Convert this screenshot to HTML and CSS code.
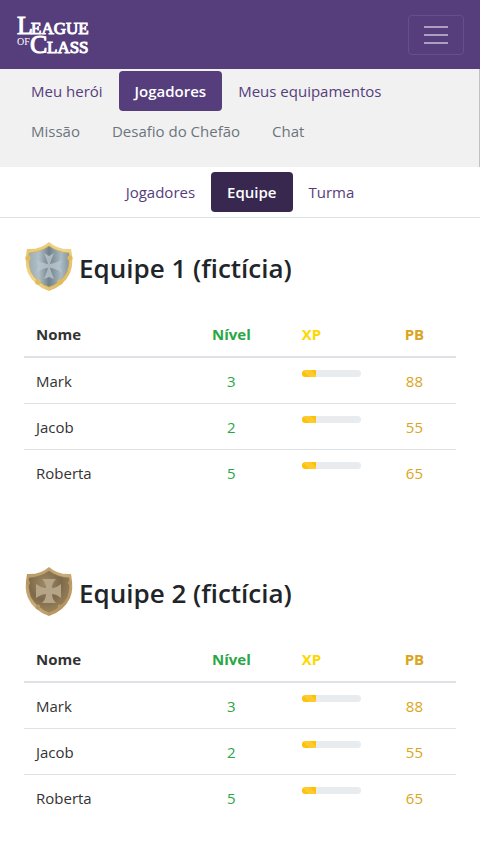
FILE: index.html
```html
<!DOCTYPE html>
<html lang="pt-BR">
<head>
<meta charset="utf-8">
<meta name="viewport" content="width=device-width, initial-scale=1">
<title>League of Class</title>
<link rel="stylesheet" href="styles.css">
</head>
<body>
<header class="navbar">
  <a class="brand" href="#" aria-label="League of Class">
    <svg class="logo" viewBox="0 0 76 44">
      <text class="logo-text" y="21"><tspan class="logo-big" x="1">L</tspan><tspan class="logo-cap" x="15">EAGUE</tspan></text>
      <text class="logo-text" y="40"><tspan class="logo-of" x="1" y="32">OF</tspan><tspan class="logo-big" x="14" y="40">C</tspan><tspan class="logo-cap" x="31">LASS</tspan></text>
    </svg>
  </a>
  <button class="toggler" type="button" aria-label="Menu">
    <svg class="bars" viewBox="0 0 30 30"><path d="M3 7h24M3 15h24M3 23h24"/></svg>
  </button>
</header>
<nav class="menu">
  <a class="pill" href="#">Meu herói</a>
  <a class="pill active" href="#">Jogadores</a>
  <a class="pill" href="#">Meus equipamentos</a>
  <a class="pill disabled" href="#">Missão</a>
  <a class="pill disabled" href="#">Desafio do Chefão</a>
  <a class="pill disabled" href="#">Chat</a>
</nav>
<nav class="submenu">
  <a class="pill" href="#">Jogadores</a>
  <a class="pill active" href="#">Equipe</a>
  <a class="pill" href="#">Turma</a>
</nav>
<main class="teams">
  <section class="team">
    <div class="team-head">
      <svg class="shield" viewBox="0 0 50 50" aria-hidden="true">
        <defs>
          <linearGradient id="steel" x2="1" y2="0"><stop offset="0" stop-color="#9cadb6"/><stop offset=".25" stop-color="#b0bfc8"/><stop offset=".5" stop-color="#71818b"/><stop offset=".8" stop-color="#a9bac4"/><stop offset="1" stop-color="#84959f"/></linearGradient>
          <linearGradient id="gold" x2="1" y2="1"><stop offset="0" stop-color="#e5c56b"/><stop offset=".5" stop-color="#efd68e"/><stop offset="1" stop-color="#d5ac4d"/></linearGradient>
        </defs>
        <path d="M25 0Q16 8 3 7Q0 22 4 31Q10 44 25 49Q40 44 46 31Q50 22 47 7Q34 8 25 0Z" fill="url(#gold)"/>
        <path d="M25 4Q17 10 5 11Q4 22 7 30Q13 41 25 45Q37 41 43 30Q46 22 45 11Q33 10 25 4Z" fill="url(#steel)" stroke="#c9a552" stroke-width=".6"/>
        <path d="M20 11L25 14L30 11Q27 18 26 22Q31 21 38 18L36 24L38 31Q31 26 26 26Q27 30 30 37L25 35L20 37Q23 30 24 26Q19 26 12 31L14 24L12 18Q19 21 24 22Q23 18 20 11Z" fill="#bac5cc" opacity=".8"/>
        <g fill="#dfbb5c"><circle cx="4" cy="16" r="2.6"/><circle cx="46" cy="16" r="2.6"/><circle cx="14" cy="40" r="2.8"/><circle cx="36" cy="40" r="2.8"/></g>
      </svg>
      <h2 class="team-title">Equipe 1 (fictícia)</h2>
    </div>
    <table class="players">
      <thead><tr><th class="name" scope="col">Nome</th><th class="level" scope="col">Nível</th><th class="xp" scope="col">XP</th><th class="pb" scope="col">PB</th></tr></thead>
      <tbody>
        <tr><td class="name">Mark</td><td class="level">3</td><td class="xp"><progress class="bar" max="100" value="25" aria-label="XP"></progress></td><td class="pb">88</td></tr>
        <tr><td class="name">Jacob</td><td class="level">2</td><td class="xp"><progress class="bar" max="100" value="25" aria-label="XP"></progress></td><td class="pb">55</td></tr>
        <tr><td class="name">Roberta</td><td class="level">5</td><td class="xp"><progress class="bar" max="100" value="25" aria-label="XP"></progress></td><td class="pb">65</td></tr>
      </tbody>
    </table>
  </section>
  <section class="team">
    <div class="team-head">
      <svg class="shield" viewBox="0 0 50 50" aria-hidden="true">
        <defs>
          <radialGradient id="bronze" cx=".4" cy=".3" r=".8"><stop offset="0" stop-color="#a08963"/><stop offset=".5" stop-color="#7d694b"/><stop offset="1" stop-color="#a38a61"/></radialGradient>
          <linearGradient id="brass" x2="1" y2="1"><stop offset="0" stop-color="#b59763"/><stop offset=".5" stop-color="#c9ad7a"/><stop offset="1" stop-color="#a78650"/></linearGradient>
        </defs>
        <path d="M25 0Q16 8 3 7Q0 22 4 31Q10 44 25 49Q40 44 46 31Q50 22 47 7Q34 8 25 0Z" fill="url(#brass)"/>
        <path d="M25 4Q17 10 5 11Q4 22 7 30Q13 41 25 45Q37 41 43 30Q46 22 45 11Q33 10 25 4Z" fill="url(#bronze)" stroke="#8f7548" stroke-width=".6"/>
        <path d="M18 12H32Q28 16 28 21Q32 21 37 17V31Q32 27 28 27Q28 32 32 36H18Q22 32 22 27Q18 27 12 31V17Q18 21 22 21Q22 16 18 12Z" fill="#b5a487"/>
        <g fill="#b69866"><circle cx="4" cy="16" r="2"/><circle cx="46" cy="16" r="2"/><circle cx="14" cy="40" r="2.4"/><circle cx="36" cy="40" r="2.4"/></g>
      </svg>
      <h2 class="team-title">Equipe 2 (fictícia)</h2>
    </div>
    <table class="players">
      <thead><tr><th class="name" scope="col">Nome</th><th class="level" scope="col">Nível</th><th class="xp" scope="col">XP</th><th class="pb" scope="col">PB</th></tr></thead>
      <tbody>
        <tr><td class="name">Mark</td><td class="level">3</td><td class="xp"><progress class="bar" max="100" value="25" aria-label="XP"></progress></td><td class="pb">88</td></tr>
        <tr><td class="name">Jacob</td><td class="level">2</td><td class="xp"><progress class="bar" max="100" value="25" aria-label="XP"></progress></td><td class="pb">55</td></tr>
        <tr><td class="name">Roberta</td><td class="level">5</td><td class="xp"><progress class="bar" max="100" value="25" aria-label="XP"></progress></td><td class="pb">65</td></tr>
      </tbody>
    </table>
  </section>
</main>
</body>
</html>
```
FILE: styles.css
```css
* { box-sizing: border-box; }
body {
  margin: 0;
  background: #fff;
  color: #212529;
  font: 400 15px/24px "Open Sans", "Noto Sans", sans-serif;
}
.navbar {
  display: flex;
  align-items: center;
  justify-content: space-between;
  padding: 8px 16px 7px;
  background: #563d7c;
}
.brand { display: flex; padding: 5px 0; }
.logo { width: 76px; height: 44px; overflow: visible; }
.logo-text { fill: #fff; stroke: #fff; font-family: "Liberation Serif", serif; }
.logo-big { font-size: 26px; stroke-width: 1px; }
.logo-cap { font-size: 17px; stroke-width: 1px; }
.logo-of { font-size: 10px; stroke-width: 0; }
.toggler {
  display: flex;
  padding: 4px 12px;
  border: 1px solid #684f8c;
  border-radius: 4px;
  background: transparent;
}
.bars {
  width: 30px;
  height: 30px;
  fill: none;
  stroke: #ab9ebe;
  stroke-width: 2px;
}
.menu {
  display: flex;
  flex-wrap: wrap;
  padding: 2px 15px 16px;
  background: #f1f1f1;
  border-right: 1px solid #c1c1c1;
}
.pill {
  padding: 8px 16px;
  border-radius: 4px;
  color: #563d7c;
  text-decoration: none;
}
.pill.disabled { color: #6c757d; }
.pill.active { color: #fff; background: #563d7c; font-weight: 600; }
.submenu {
  display: flex;
  justify-content: center;
  padding: 5px 0;
  border-bottom: 1px solid #dee2e6;
}
.submenu .pill.active { background: #38274f; }
.teams {
  display: grid;
  gap: 72px;
  padding: 24px;
}
.team-head {
  display: flex;
  gap: 5px;
  margin-bottom: 17px;
}
.team-title {
  margin: 0;
  padding-top: 8px;
  font-size: 26px;
  font-weight: 600;
  line-height: 36px;
}
.shield { width: 50px; height: 50px; }
.players {
  width: 100%;
  table-layout: fixed;
  border-collapse: separate;
  border-spacing: 0;
}
.players th, .players td {
  padding: 12px 12px 10px;
  line-height: 23px;
  text-align: left;
  vertical-align: top;
}
.players th {
  padding-top: 14px;
  font-weight: 700;
  border-bottom: 2px solid #dee2e6;
}
.players tr + tr td { border-top: 1px solid #dee2e6; }
.players .name { width: 34.5%; color: #333; }
.players .level { width: 27%; color: #28a745; text-align: center; }
.players .xp { color: #ffd700; }
.players .pb { color: #daa520; text-align: center; }
.bar {
  display: block;
  width: 100%;
  height: 7px;
  overflow: hidden;
  border: 0;
  border-radius: 4px;
  background: #e9ecef;
  appearance: none;
}
.bar::-webkit-progress-bar { background: #e9ecef; }
.bar::-webkit-progress-value {
  background: linear-gradient(45deg, #ffca2c 25%, #ffc107 25%, #ffc107 50%, #ffca2c 50%, #ffca2c 75%, #ffc107 75%) 0 0 / 16px 16px;
}
```
